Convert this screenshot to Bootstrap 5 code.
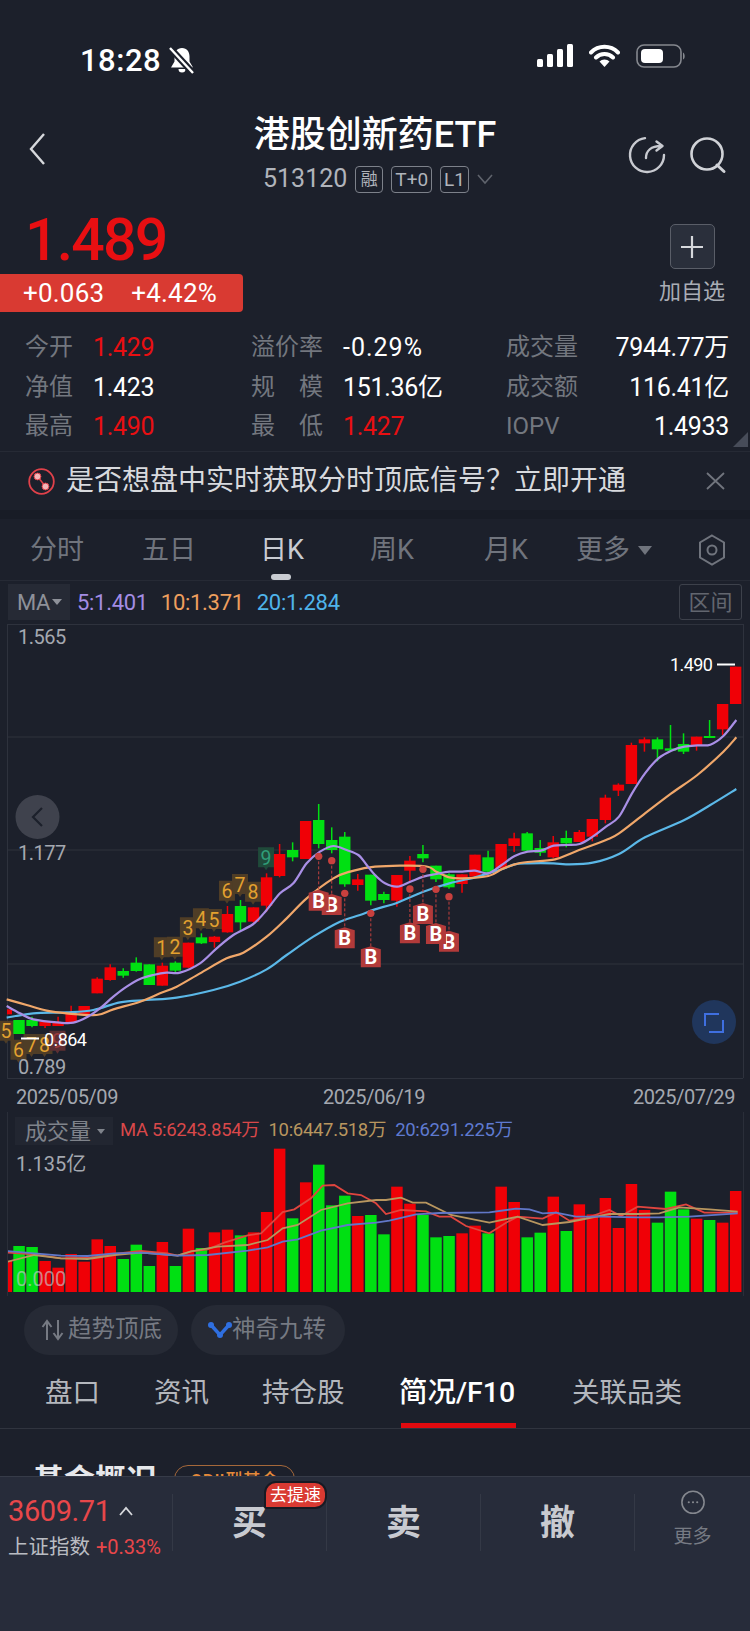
<!DOCTYPE html>
<html lang="zh-CN">
<head>
    <meta charset="UTF-8">
    <title>港股创新药ETF</title>
    <link rel="stylesheet" href="https://cdn.jsdelivr.net/npm/bootstrap@5.3.3/dist/css/bootstrap.min.css">
    <style>
        html, body { width: 750px; height: 1631px; overflow: hidden; }
        body { background: #1c202b; color: #fff; font-family: Roboto, "Noto Sans CJK SC", sans-serif; }
        .up { color: #e80f12; }
        svg { display: block; }
        svg text { font-family: Roboto, "Noto Sans CJK SC", sans-serif; }

        /* status bar */
        .status-row { height: 108px; padding: 44px 64px 0 80px; }
        .status-time { font-size: 31px; font-weight: 500; line-height: 34px; letter-spacing: .5px; }

        /* title */
        .head-row { height: 92px; padding: 0 23px 0 28px; }
        .head-mid { left: 0; right: 0; top: 8px; }
        .head-title { font-size: 36px; font-weight: 500; line-height: 38px; }
        .head-sub { font-size: 25px; line-height: 34px; color: #b0b4bb; margin-top: 8px; margin-left: 6px; }
        .sub-tag { font-size: 19px; line-height: 25px; height: 27px; border: 1px solid #7d818a; border-radius: 4px; padding: 0 3px; margin-left: 8px; }
        .sub-tag-one { width: 28px; font-size: 17px; padding: 0; text-align: center; }

        /* price */
        .quote-row { height: 127px; }
        .price-now { font-size: 59px; font-weight: 500; line-height: 62px; letter-spacing: -1.800px; padding: 9px 0 0 25px; height: 74px; color: #e80f12; }
        .price-tag { width: 243px; height: 38px; background: #d93a32; border-radius: 0 4px 4px 0; font-size: 26px; line-height: 38px; padding-left: 23px; letter-spacing: .2px; white-space: nowrap; }
        .price-tag span + span { margin-left: 27px; }
        .watch-box { width: 66px; margin: 24px 25px 0 0; }
        .watch-btn { width: 45px; height: 45px; background: #2a2f3b; border: 1px solid #5a5e68; border-radius: 5px; }
        .watch-txt { font-size: 22px; line-height: 24px; color: #a9adb5; margin-top: 11px; white-space: nowrap; }

        /* quote table */
        .info-box { height: 125px; padding-top: 1px; border-bottom: 1px solid #262a35; position: relative; }
        .info-row { height: 39.5px; font-size: 25px; padding: 0 21px 0 25px; }
        .info-lab { font-size: 24px; color: #73777f; white-space: nowrap; }
        .info-a { width: 226px; }
        .info-a .info-lab { width: 68px; }
        .info-b { width: 255px; }
        .info-b .info-lab { width: 92px; }
        .info-c { flex: 1; }
        .info-val { letter-spacing: -.3px; white-space: nowrap; }
        .info-wide { letter-spacing: 1px; }
        .spread-lab { display: flex; justify-content: space-between; width: 72px; }
        .info-corner { position: absolute; right: 2px; bottom: 4px; width: 0; height: 0; border-left: 15px solid transparent; border-bottom: 15px solid #474c59; }

        /* notice */
        .notice-row { height: 58px; padding: 0 25px 0 28px; font-size: 28px; color: #d8dade; }
        .notice-txt { margin-left: 11px; white-space: nowrap; }
        .gap-strip { height: 9px; background: #181c26; }

        /* period tabs */
        .period-row { height: 62px; border-bottom: 1px solid #262a35; position: relative; font-size: 27px; color: #70747d; }
        .period-row > span { position: absolute; top: 11px; line-height: 40px; white-space: nowrap; }
        .period-row > span.on { color: #c9ccd2; }
        .period-pill { position: absolute; left: 271px; bottom: 0; width: 20px; height: 6px; background: #c9ccd2; border-radius: 3px; }
        .tri-down { display: inline-block; width: 0; height: 0; border-left: 7px solid transparent; border-right: 7px solid transparent; border-top: 9px solid #70747d; }
        .period-tri { vertical-align: 4px; margin-left: 4px; }

        /* MA row */
        .ma-row { height: 41px; padding: 3px 8px 2px; font-size: 22px; letter-spacing: -.3px; }
        .ma-box { width: 62px; height: 36px; background: #262a35; color: #8e9199; padding-left: 9px; margin-right: 7px; }
        .ma-box .tri-down { border-left-width: 5px; border-right-width: 5px; border-top-width: 6px; border-top-color: #8e9199; margin-left: 2px; }
        .ma-val + .ma-val { margin-left: 13px; }
        .range-btn { width: 63px; height: 36px; border: 1px solid #3d414b; border-radius: 3px; color: #62666f; letter-spacing: 0; }

        /* volume */
        .vol-box { height: 184px; margin: 0 6px 0 7px; border-left: 1px solid #2a2e39; border-right: 1px solid #2a2e39; }
        .vol-head { height: 34px; padding: 4px 0 0 7px; font-size: 18.5px; white-space: nowrap; letter-spacing: -.32px; }
        .vol-pick { width: 98px; height: 28px; background: #222631; font-size: 22px; letter-spacing: 0; color: #7f838b; padding-left: 10px; margin-right: 7px; }
        .vol-pick .tri-down { border-left-width: 4px; border-right-width: 4px; border-top-width: 5px; border-top-color: #7f838b; margin-left: 6px; }
        .vol-ma + .vol-ma { margin-left: 9px; }

        /* chips */
        .chip-row { height: 59px; padding: 9px 0 0 24px; gap: 13px; }
        .tool-chip { width: 154px; height: 50px; background: #262a35; border-radius: 25px; font-size: 23.5px; color: #767a83; padding-left: 17px; white-space: nowrap; }

        /* sub tabs */
        .sub-tabs { height: 74px; border-bottom: 1px solid #30343f; position: relative; font-size: 27.5px; color: #b4b7bd; }
        .sub-tabs > span { position: absolute; top: 17px; line-height: 42px; white-space: nowrap; }
        .sub-tabs > span.on { color: #fff; font-size: 28.5px; font-weight: 500; }
        .sub-tabs > i { position: absolute; left: 401px; bottom: 0; width: 115px; height: 5px; background: #e00a0f; }

        /* clipped content under the bar */
        .peek-row { height: 47px; overflow: hidden; padding: 31px 0 0 33px; font-size: 31px; font-weight: 700; line-height: 42px; white-space: nowrap; color: #e6e8eb; }
        .peek-tag { width: 121px; height: 40px; margin: 5px 0 0 17px; font-size: 18px; font-weight: 500; line-height: 30px; text-align: center; color: #e58a3a; border: 1px solid #a5683a; border-radius: 14px; }

        /* bottom bar */
        .trade-bar { height: 155px; background: #272c3a; border-top: 1px solid #363b48; position: relative; }
        .index-box { width: 172px; padding: 16px 0 0 8px; }
        .index-num { font-size: 29px; line-height: 36px; color: #e8474a; letter-spacing: -.4px; }
        .index-lab { font-size: 20.5px; line-height: 30px; margin-top: 3px; color: #b9bcc2; white-space: nowrap; }
        .index-pct { font-size: 20px; color: #e8474a; margin-left: 6px; letter-spacing: 0; }
        .trade-btn { width: 154px; height: 57px; margin-top: 17px; padding-top: 3px; border-left: 1px solid #343946; font-size: 35px; font-weight: 700; color: #c8cad0; }
        .trade-more { flex: 1; height: 57px; margin-top: 17px; border-left: 1px solid #343946; font-size: 19px; color: #777b84; }
        .more-txt { margin-top: 8px; }
        .fast-badge { position: absolute; left: 264px; top: 4px; width: 63px; height: 28px; background: #d93a32; border: 2px solid #171a23; border-radius: 12px 12px 12px 2px; font-size: 17px; line-height: 24px; text-align: center; color: #fff; }
    </style>
</head>
<body>
    <!-- status bar -->
    <div class="status-row d-flex justify-content-between align-items-start">
        <div class="d-flex align-items-center gap-2">
            <span class="status-time">18:28</span>
            <svg width="26" height="28" viewBox="0 0 26 28"><path d="M13 1c-5 0-7.500 4-7.500 8.500v5L2 20.500h22l-3.500-6v-5C20.500 5 18 1 13 1z" fill="#fff"/><path d="M9.500 22a3.500 3.500 0 0 0 7 0z" fill="#fff"/><path d="M1 1l23 25" stroke="#1c202b" stroke-width="6.500"/><path d="M1 1l23 25" stroke="#fff" stroke-width="2.400"/></svg>
        </div>
        <div class="d-flex align-items-center gap-3">
            <svg width="36" height="24" viewBox="0 0 36 24"><rect x="0" y="15" width="6" height="8" rx="1.5" fill="#fff"/><rect x="10" y="10" width="6" height="13" rx="1.5" fill="#fff"/><rect x="20" y="5" width="6" height="18" rx="1.5" fill="#fff"/><rect x="30" y="0" width="6" height="23" rx="1.5" fill="#fff"/></svg>
            <svg width="31" height="24" viewBox="0 0 31 24"><path d="M2 8.500a19 19 0 0 1 27 0M7 13.500a12 12 0 0 1 17 0" fill="none" stroke="#fff" stroke-width="4" stroke-linecap="round"/><path d="M10.500 17.500a7 7 0 0 1 10 0l-5 5.500z" fill="#fff"/></svg>
            <svg width="50" height="24" viewBox="0 0 50 24"><rect x="1" y="1" width="44" height="22" rx="7" fill="none" stroke="#85888f" stroke-width="1.6"/><rect x="5" y="5" width="22" height="14" rx="4" fill="#fff"/><path d="M47 8.500c2 .5 2.500 6.500 0 7z" fill="#85888f"/></svg>
        </div>
    </div>

    <!-- title -->
    <div class="head-row d-flex justify-content-between align-items-start position-relative">
        <svg class="mt-4" width="18" height="34" viewBox="0 0 18 34"><path d="M16 2L3 17l13 15" fill="none" stroke="#d6d8dc" stroke-width="2.400"/></svg>
        <div class="head-mid position-absolute text-center">
            <div class="head-title">港股创新药ETF</div>
            <div class="head-sub d-flex justify-content-center align-items-center">
                <span>513120</span>
                <span class="sub-tag sub-tag-one">融</span>
                <span class="sub-tag">T+0</span>
                <span class="sub-tag">L1</span>
                <svg class="ms-2" width="16" height="11" viewBox="0 0 16 11"><path d="M1 1l7 8 7-8" fill="none" stroke="#5f636c" stroke-width="1.600"/></svg>
            </div>
        </div>
        <div class="d-flex gap-4 mt-4 pt-1">
            <svg width="38" height="38" viewBox="0 0 38 38"><path d="M17 2.100A17 17 0 1 0 36 19" fill="none" stroke="#c8cad0" stroke-width="2.400" stroke-linecap="round"/><path d="M18 22c0-7 5-12 15-12M28.500 5.500l6 4.500-6 4.500" fill="none" stroke="#c8cad0" stroke-width="2.400" stroke-linecap="round" stroke-linejoin="round"/></svg>
            <svg width="37" height="38" viewBox="0 0 37 38"><circle cx="17" cy="18" r="15.500" fill="none" stroke="#d0d2d7" stroke-width="2.600"/><path d="M27 29l7 6.500" stroke="#d0d2d7" stroke-width="3" stroke-linecap="round"/></svg>
        </div>
    </div>

    <!-- price and add to watchlist -->
    <div class="quote-row d-flex justify-content-between">
        <div>
            <div class="price-now">1.489</div>
            <div class="price-tag"><span>+0.063</span><span>+4.42%</span></div>
        </div>
        <div class="watch-box d-flex flex-column align-items-center">
            <div class="watch-btn d-flex align-items-center justify-content-center">
                <svg width="24" height="24" viewBox="0 0 24 24"><path d="M12 1v22M1 12h22" stroke="#d6d8dc" stroke-width="2.200"/></svg>
            </div>
            <div class="watch-txt">加自选</div>
        </div>
    </div>

    <!-- quote table -->
    <div class="info-box">
        <div class="info-row d-flex align-items-center">
            <div class="info-a d-flex"><span class="info-lab">今开</span><span class="info-val up">1.429</span></div>
            <div class="info-b d-flex"><span class="info-lab">溢价率</span><span class="info-val info-wide">-0.29%</span></div>
            <div class="info-c d-flex justify-content-between"><span class="info-lab">成交量</span><span class="info-val">7944.77万</span></div>
        </div>
        <div class="info-row d-flex align-items-center">
            <div class="info-a d-flex"><span class="info-lab">净值</span><span class="info-val">1.423</span></div>
            <div class="info-b d-flex"><span class="info-lab"><span class="spread-lab"><span>规</span><span>模</span></span></span><span class="info-val">151.36亿</span></div>
            <div class="info-c d-flex justify-content-between"><span class="info-lab">成交额</span><span class="info-val">116.41亿</span></div>
        </div>
        <div class="info-row d-flex align-items-center">
            <div class="info-a d-flex"><span class="info-lab">最高</span><span class="info-val up">1.490</span></div>
            <div class="info-b d-flex"><span class="info-lab"><span class="spread-lab"><span>最</span><span>低</span></span></span><span class="info-val up">1.427</span></div>
            <div class="info-c d-flex justify-content-between"><span class="info-lab">IOPV</span><span class="info-val">1.4933</span></div>
        </div>
        <div class="info-corner"></div>
    </div>

    <!-- notice -->
    <div class="notice-row d-flex align-items-center">
        <svg width="27" height="27" viewBox="0 0 27 27"><circle cx="13.500" cy="13.500" r="12.300" fill="none" stroke="#e0414a" stroke-width="1.800"/><path d="M9.500 8.500l8 10" stroke="#e0414a" stroke-width="1.500"/><circle cx="9.500" cy="8.500" r="3.400" fill="#f2b6b8" stroke="#e0414a"/><circle cx="17.500" cy="18.500" r="3.400" fill="#f2b6b8" stroke="#e0414a"/></svg>
        <span class="notice-txt">是否想盘中实时获取分时顶底信号？立即开通</span>
        <svg class="ms-auto" width="19" height="18" viewBox="0 0 19 18"><path d="M1 1l17 16M18 1L1 17" stroke="#71757e" stroke-width="1.800"/></svg>
    </div>
    <div class="gap-strip"></div>

    <!-- period tabs -->
    <div class="period-row">
        <span style="left:30px">分时</span>
        <span style="left:142px">五日</span>
        <span class="on" style="left:260px">日K</span>
        <span style="left:370px">周K</span>
        <span style="left:484px">月K</span>
        <span style="left:576px">更多<i class="tri-down period-tri ms-2"></i></span>
        <svg class="position-absolute" style="left:698px;top:15px" width="28" height="32" viewBox="0 0 28 32"><path d="M14 1.500l12 7v15l-12 7-12-7v-15z" fill="none" stroke="#70747d" stroke-width="2"/><circle cx="14" cy="16" r="4.500" fill="none" stroke="#70747d" stroke-width="2"/></svg>
        <div class="period-pill"></div>
    </div>

    <!-- MA row -->
    <div class="ma-row d-flex align-items-center">
        <div class="ma-box d-flex align-items-center">MA<i class="tri-down"></i></div>
        <span class="ma-val" style="color:#a48de4">5:1.401</span>
        <span class="ma-val" style="color:#ee9f5e">10:1.371</span>
        <span class="ma-val" style="color:#4fb4ea">20:1.284</span>
        <div class="range-btn ms-auto d-flex align-items-center justify-content-center">区间</div>
    </div>

    <!-- k-line chart, drawn from the arrays at the bottom -->
    <svg id="klineChart" width="750" height="490" viewBox="0 622 750 490"></svg>

    <!-- volume -->
    <div class="vol-box">
        <div class="vol-head d-flex align-items-center">
            <div class="vol-pick d-flex align-items-center">成交量<i class="tri-down"></i></div>
            <span class="vol-ma" style="color:#d9484a">MA 5:6243.854万</span>
            <span class="vol-ma" style="color:#b8965f">10:6447.518万</span>
            <span class="vol-ma" style="color:#5f7ad0">20:6291.225万</span>
        </div>
        <svg id="volChart" width="736" height="150" viewBox="7 1146 736 150"></svg>
    </div>

    <!-- tool chips -->
    <div class="chip-row d-flex">
        <div class="tool-chip d-flex align-items-center">
            <svg class="me-1" width="23" height="22" viewBox="0 0 23 22"><path d="M6 21V3M1.500 8L6 2l4.500 6M17 1v18M12.500 14l4.500 6 4.500-6" fill="none" stroke="#767a83" stroke-width="2"/></svg>趋势顶底
        </div>
        <div class="tool-chip d-flex align-items-center">
            <svg width="24" height="18" viewBox="0 0 24 18"><path d="M3 4l9 10 9-10" fill="none" stroke="#2f6fe0" stroke-width="3.500"/><circle cx="3" cy="4" r="3" fill="#2f6fe0"/><circle cx="21" cy="4" r="3" fill="#2f6fe0"/><circle cx="12" cy="14" r="3" fill="#2f6fe0"/></svg>神奇九转
        </div>
    </div>

    <!-- sub tabs -->
    <div class="sub-tabs">
        <span style="left:45px">盘口</span>
        <span style="left:154px">资讯</span>
        <span style="left:262px">持仓股</span>
        <span class="on" style="left:399px">简况/F10</span>
        <span style="left:572px">关联品类</span>
        <i></i>
    </div>

    <!-- content cut off by the bottom bar -->
    <div class="peek-row d-flex align-items-start">基金概况<span class="peek-tag">QDII型基金</span></div>

    <!-- bottom bar -->
    <div class="trade-bar d-flex">
        <div class="index-box">
            <div class="index-num d-flex align-items-center">3609.71
                <svg class="ms-2" width="14" height="10" viewBox="0 0 14 10"><path d="M1 9l6-7 6 7" fill="none" stroke="#d6d8dc" stroke-width="1.800"/></svg>
            </div>
            <div class="index-lab">上证指数<span class="index-pct">+0.33%</span></div>
        </div>
        <div class="trade-btn d-flex align-items-center justify-content-center">买</div>
        <div class="trade-btn d-flex align-items-center justify-content-center">卖</div>
        <div class="trade-btn d-flex align-items-center justify-content-center">撤</div>
        <div class="trade-more d-flex flex-column align-items-center">
            <svg width="32" height="32" viewBox="0 0 32 32" style="margin-top:-4px"><circle cx="16" cy="16" r="14.500" fill="none" stroke="#85888f" stroke-width="2"/><circle cx="10.500" cy="16" r="1.400" fill="#85888f"/><circle cx="16" cy="16" r="1.400" fill="#85888f"/><circle cx="21.500" cy="16" r="1.400" fill="#85888f"/></svg>
            <span class="more-txt">更多</span>
        </div>
        <div class="fast-badge">去提速</div>
    </div>

    <script src="https://cdn.jsdelivr.net/npm/bootstrap@5.3.3/dist/js/bootstrap.bundle.min.js"></script>
    <script>
        const RED = '#f00006', GREEN = '#00e012';
        const colX = i => 19 + 13.03 * i;
        // measured on a 3x crop, so divide by 3
        const kY = y => 620 + y / 3;
        const vY = y => 1090 + y / 3;

        // type, wick top, body top, body bottom, wick bottom
        const candles = [
            ['g',1200,1200,1242,1242],['g',1190,1200,1218,1222],['r',1205,1205,1218,1224],['r',1190,1207,1218,1218],
            ['r',1157,1178,1206,1208],['r',1158,1158,1182,1182],['r',1072,1076,1120,1120],['r',1033,1042,1080,1082],
            ['g',1045,1053,1067,1073],['g',1012,1028,1053,1055],['g',1033,1033,1095,1095],['r',1028,1037,1097,1097],
            ['g',1024,1028,1052,1058],['r',968,968,1043,1043],['g',940,952,970,972],['r',948,950,966,983],
            ['r',858,882,937,938],['g',840,858,907,930],['r',862,862,905,908],['r',760,772,857,875],
            ['r',672,702,768,772],['g',667,690,712,724],['r',603,603,717,717],['g',552,600,672,685],
            ['g',622,660,690,700],['g',636,650,793,800],['r',762,778,795,812],['g',764,764,842,856],
            ['g',815,822,840,850],['r',765,765,842,860],['r',708,722,752,785],['g',675,702,715,727],
            ['g',737,737,778,786],['g',760,763,802,806],['r',763,763,792,818],['r',704,704,770,770],
            ['g',692,712,755,760],['r',672,672,745,745],['r',638,655,678,696],['g',636,640,692,694],
            ['g',660,684,698,708],['r',648,667,712,714],['g',632,654,670,682],['r',630,636,666,666],
            ['r',597,597,650,664],['r',524,533,600,610],['r',490,494,512,528],['r',368,375,492,492],
            ['r',352,358,370,395],['g',352,358,388,424],['g',315,385,392,394],['g',340,372,395,402],
            ['r',350,350,376,392],['g',300,348,354,354],['r',252,252,328,345],['r',140,140,252,252]
        ];

        // [x, y] on the crop; the second part of a line has x counted from the right half
        const join = (a, b, off = 1125) => a.concat(b.map(p => [p[0] + off, p[1]]));
        const ma5 = join([[20,1158],[60,1180],[100,1198],[180,1208],[220,1208],[260,1192],[300,1165],[340,1130],[380,1100],[420,1077],[460,1065],[500,1058],[540,1058],[600,1030],[650,985],[700,945],[760,912],[800,870],[840,820],[880,790],[920,730],[960,695],[1000,678],[1040,690],[1075,705],[1100,735]],
            [[0,765],[30,790],[67,800],[106,785],[145,770],[184,762],[223,755],[262,755],[300,752],[340,760],[380,735],[419,708],[458,695],[497,692],[536,677],[575,675],[614,672],[653,650],[693,620],[732,590],[771,520],[810,460],[850,415],[889,392],[928,380],[967,376],[1006,374],[1045,348],[1084,300]]);
        const ma10 = join([[20,1138],[80,1155],[140,1172],[200,1180],[290,1185],[340,1168],[420,1145],[480,1120],[530,1100],[600,1060],[680,1015],[730,998],[800,950],[860,895],[920,835],[1000,775],[1050,755]],
            [[0,740],[145,738],[184,755],[223,772],[262,775],[340,768],[380,748],[419,733],[458,726],[540,718],[600,695],[693,660],[732,640],[810,580],[889,520],[967,465],[1045,395],[1084,352]]);
        const ma20 = join([[20,1193],[100,1180],[200,1177],[280,1170],[360,1147],[440,1140],[530,1133],[640,1110],[720,1085],[800,1048],[860,1005],[940,950],[1020,905],[1080,885]],
            [[0,868],[67,848],[145,815],[223,790],[300,772],[340,760],[380,748],[419,733],[458,730],[536,730],[575,733],[653,728],[732,702],[810,652],[928,600],[1006,555],[1084,507]]);

        // smooth line through the points
        function curve(pts, toY) {
            const p = pts.map(q => [q[0] / 3, toY(q[1])]);
            let d = `M${p[0][0]} ${p[0][1]}`;
            for (let i = 0; i < p.length - 1; i++) {
                const a = p[Math.max(i - 1, 0)], b = p[i], c = p[i + 1], e = p[Math.min(i + 2, p.length - 1)];
                d += `C${b[0] + (c[0] - a[0]) / 6} ${b[1] + (c[1] - a[1]) / 6} ${c[0] - (e[0] - b[0]) / 6} ${c[1] - (e[1] - b[1]) / 6} ${c[0]} ${c[1]}`;
            }
            return d;
        }

        function numTile(x, y, txt, bg, fg) {
            return `<path d="M${x-8} ${y-11}h16v20h-6l-2 3-2-3h-6z" fill="${bg}"/><text x="${x}" y="${y+6.500}" font-size="19.500" text-anchor="middle" fill="${fg}">${txt}</text>`;
        }

        function buyTile(i, dotY, y) {
            const x = colX(i), dot = kY(dotY), c = kY(y);
            return `<path d="M${x} ${dot}V${c-10}" stroke="#c2403f" stroke-width="1" stroke-dasharray="3 2"/><circle cx="${x}" cy="${dot}" r="3.700" fill="#c8403e"/>` +
                `<path d="M${x-10} ${c-8}l10-3 10 3v18h-20z" fill="#b23a3a"/><text x="${x}" y="${c+7}" font-size="20" font-weight="700" text-anchor="middle" fill="#fff">B</text>`;
        }

        let k = '';
        // frame and grid
        [737, 850, 964].forEach(y => { k += `<path d="M7 ${y}H743" stroke="#2e323d"/>`; });
        k += '<path d="M7.500 624.500H743M7.500 624V1078M743.500 624V1078M7 1078.500H743M7 1112.500H743" stroke="#2e323d" fill="none"/>';

        // a bit of the candle before the first one, at the left edge
        k += `<rect x="7" y="${kY(1168)}" width="5" height="5" fill="${RED}"/>`;

        // tiles of the nine-turn signal lie under the candles
        const orangeBg = '#4f3d26', orangeFg = '#e3a12f';
        [[6,1235,'5'],[18.500,1292,'6'],[31.500,1275,'7'],[44.500,1275,'8']].forEach(t => { k += numTile(t[0], kY(t[1]), t[2], orangeBg, orangeFg); });
        k += numTile(57.500, kY(1265), '9', '#5c2f33', '#9c3a3c');
        [[11,'1',985],[12,'2',983],[13,'3',925],[14,'4',898],[15,'5',900],[16,'6',815],[17,'7',795],[18,'8',818]].forEach(t => {
            k += numTile(colX(t[0]) - 0.5, kY(t[2]), t[1], orangeBg, orangeFg);
        });
        k += numTile(colX(19) - 0.5, kY(715), '9', '#1f4a3a', '#2f9d78');

        candles.forEach((c, i) => {
            const x = colX(i), col = c[0] === 'r' ? RED : GREEN;
            k += `<path d="M${x} ${kY(c[1])}V${kY(c[4])}" stroke="${col}" stroke-width="1.500"/>`;
            k += `<rect x="${x-5.700}" y="${kY(c[2])}" width="11.400" height="${(c[3]-c[2])/3}" fill="${col}"/>`;
        });

        [[ma20,'#5bb8e8'],[ma10,'#f0a76a'],[ma5,'#a98fe6']].forEach(m => {
            k += `<path d="${curve(m[0], kY)}" fill="none" stroke="${m[1]}" stroke-width="2.200"/>`;
        });

        // buy marks, the left ones lie on top
        [[33,830,965],[32,808,942],[31,748,882],[30,807,940],[27,880,1012],[25,820,955],[24,722,855],[23,709,842]].forEach(b => { k += buyTile(b[0], b[1], b[2]); });

        // price labels
        k += '<g font-size="20" fill="#a4a8b0" letter-spacing="-.5"><text x="18" y="644">1.565</text><text x="18" y="860">1.177</text><text x="18" y="1074">0.789</text></g>';
        k += '<g font-size="18" fill="#fff" letter-spacing="-.6"><text x="44" y="1046">0.864</text><text x="670" y="671">1.490</text></g>';
        k += '<path d="M21 1038.500H39M717 664.500H735" stroke="#fff" stroke-width="2"/>';
        k += '<g font-size="20" fill="#a4a8b0" letter-spacing="-.45"><text x="16" y="1104">2025/05/09</text><text x="323" y="1104">2025/06/19</text><text x="633" y="1104">2025/07/29</text></g>';

        // round buttons over the chart
        k += '<circle cx="37.500" cy="817" r="22" fill="#3f424d"/><path d="M42 808l-9 9 9 9" fill="none" stroke="#1c202b" stroke-width="2.200"/>';
        k += '<circle cx="714" cy="1022" r="22" fill="#20365c"/><path d="M719 1014h-14v12M709 1032h14v-12" fill="none" stroke="#3f6fe0" stroke-width="2"/>';
        document.getElementById('klineChart').innerHTML = k;

        // volume tops, first one is the bar left of candle 0
        const vols = [['r',512],['g',468],['g',471],['r',513],['r',533],['r',492],['r',515],['r',448],['r',468],['g',507],['g',464],['g',528],['r',456],['g',528],['r',416],['g',474],['r',427],['r',419],['g',436],['r',427],['r',366],['r',176],['g',385],['r',277],['g',224],['g',346],['g',317],['r',378],['g',375],
            ['g',433],['r',290],['r',341],['g',375],['g',442],['g',438],['r',430],['r',407],['g',430],['r',290],['r',336],['g',442],['g',428],['r',320],['g',423],['r',343],['r',373],['r',324],['r',414],['r',282],['r',360],['g',398],['g',305],['g',358],['r',386],['g',390],['r',398],['r',303]];

        const vol5 = join([[20,488],[100,493],[180,505],[270,503],[340,492],[420,483],[500,490],[530,497],[570,484],[620,478],[670,458],[740,436],[780,430],[845,366],[880,358],[930,325],[965,287],[1000,285],[1040,310],[1080,315]],
            [[0,340],[30,372],[75,360],[150,364],[190,380],[225,380],[270,408],[340,430],[390,398],[425,380],[500,386],[540,367],[580,392],[630,385],[700,360],[735,378],[785,350],[870,357],[930,343],[985,368],[1085,368]]);
        const vol10 = join([[20,515],[100,495],[180,505],[260,507],[340,495],[420,488],[530,497],[570,484],[650,470],[740,465],[800,450],[845,415],[890,405],[960,360],[1040,340]],
            [[0,330],[30,330],[75,323],[110,338],[150,338],[225,375],[340,398],[425,380],[500,405],[580,396],[700,372],[785,372],[850,370],[910,352],[1000,358],[1085,365]]);
        const vol20 = join([[20,483],[100,490],[180,497],[260,498],[340,490],[420,488],[530,497],[620,495],[740,482],[800,472],[845,455],[890,448],[960,422],[1040,405]],
            [[0,398],[40,392],[120,373],[190,369],[340,367],[420,356],[460,358],[500,370],[540,368],[600,380],[680,380],[780,382],[850,382],[940,380],[1085,370]]);

        let v = '';
        vols.forEach((b, n) => {
            const x = colX(n - 1) - 1, w = n === 0 ? 5 : 11.500;
            const left = n === 0 ? 6 : x - 5.700;
            v += `<rect x="${left}" y="${vY(b[1])}" width="${w}" height="${(606-b[1])/3}" fill="${b[0] === 'r' ? RED : GREEN}"/>`;
        });
        [[vol5,'#e0453f'],[vol10,'#b8965f'],[vol20,'#6177c8']].forEach(m => {
            const pts = m[0].map(q => `${q[0] / 3},${vY(q[1])}`).join(' ');
            v += `<polyline points="${pts}" fill="none" stroke="${m[1]}" stroke-width="1.800"/>`;
        });
        v += '<text x="15" y="1171" font-size="20" fill="#a4a8b0">1.135亿</text>';
        v += '<text x="15" y="1286" font-size="20" fill="#c8cad0" fill-opacity=".65">0.000</text>';
        document.getElementById('volChart').innerHTML = v;
    </script>
</body>
</html>
